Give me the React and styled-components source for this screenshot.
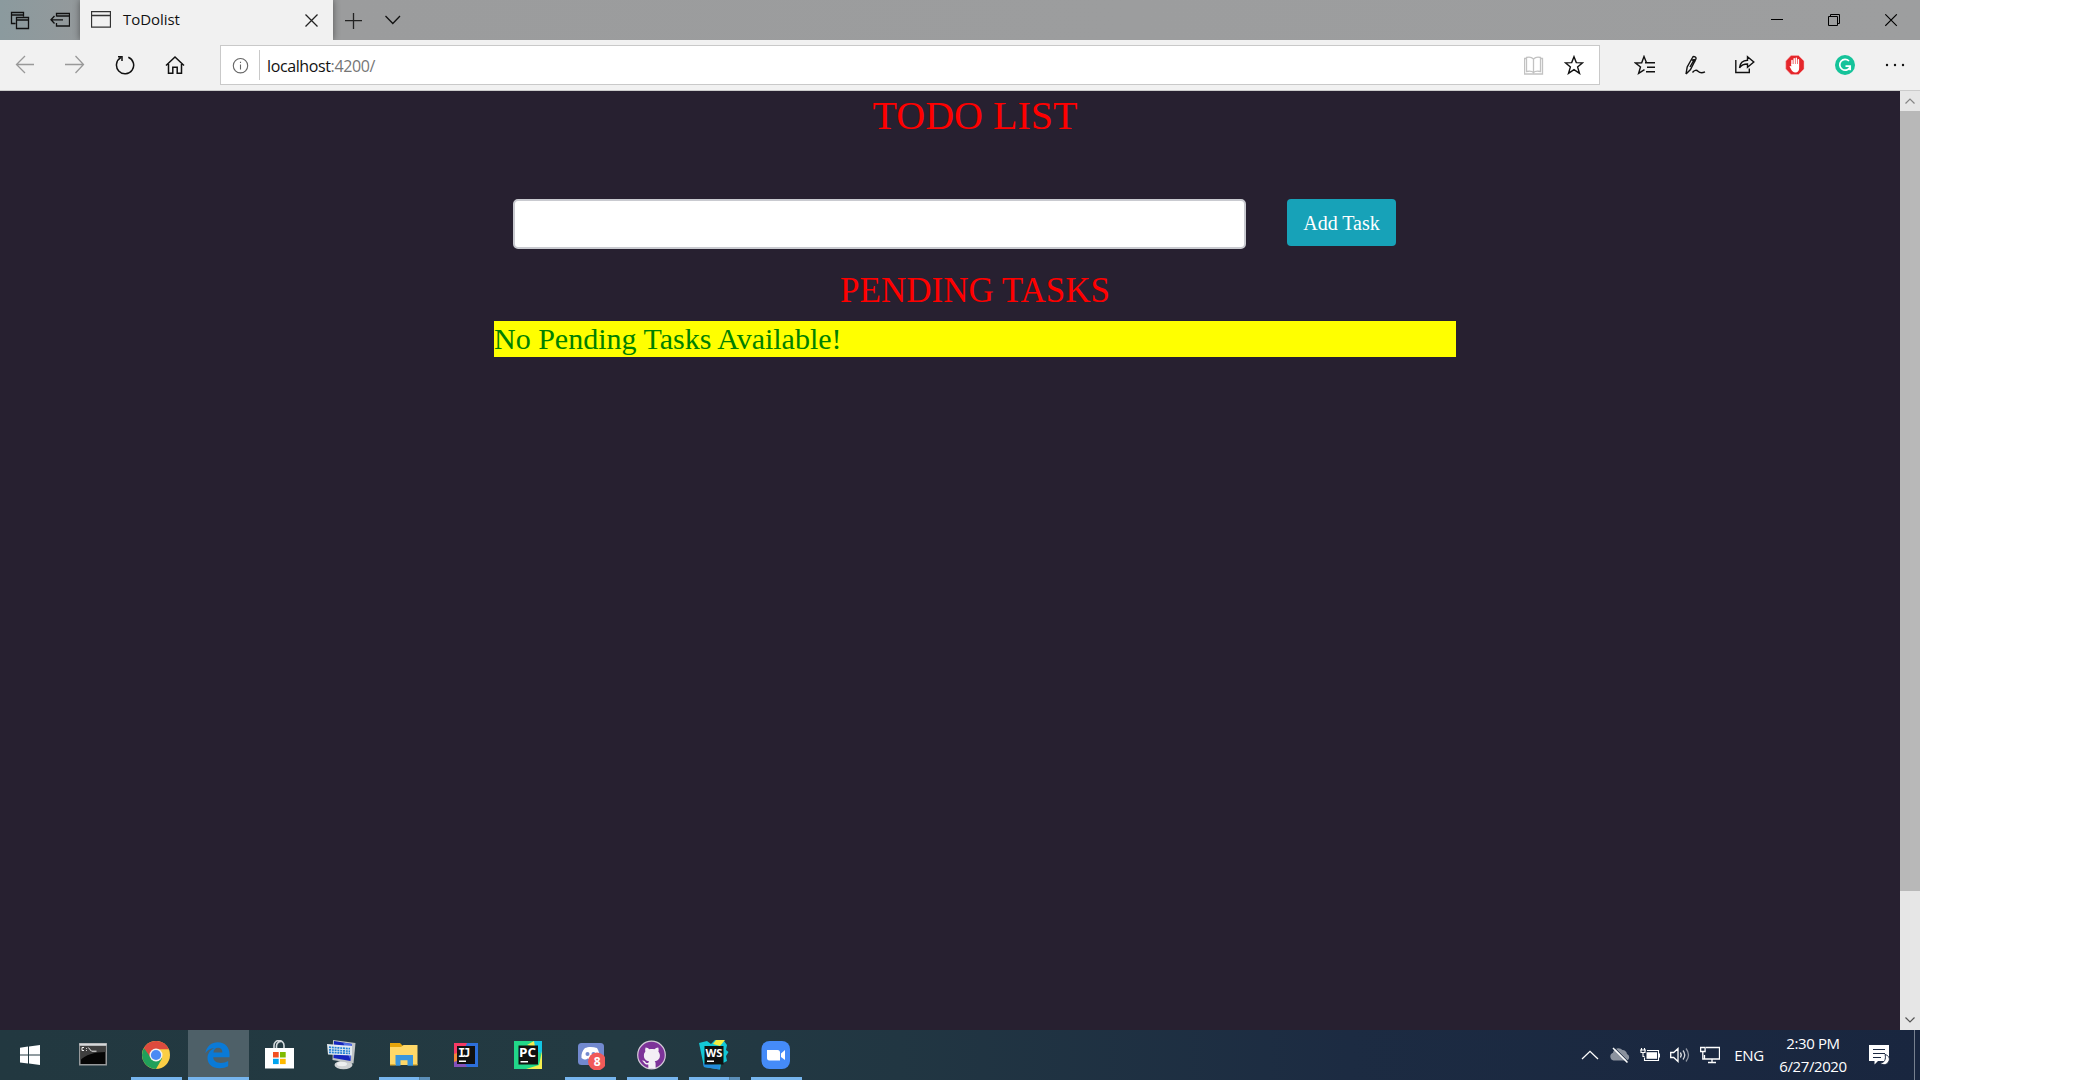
import React from "react";
import styled, { createGlobalStyle } from "styled-components";

const Global = createGlobalStyle`
  *, *::before, *::after { box-sizing: border-box; }
  html, body { margin: 0; background: #fff; }
  svg { display: block; flex: none; }
`;

const uiFont = `"Open Sans", "Noto Sans", sans-serif`;

const Screen = styled.div`
  width: 1920px;
  height: 1080px;
  display: flex;
  flex-direction: column;
  overflow: hidden;
`;

/* ---------- browser chrome ---------- */
const TabStrip = styled.header`
  height: 40px;
  display: flex;
  background: linear-gradient(90deg, #8b9a9e 0, #95999b 90px, #9b9c9d 340px, #9d9e9f 100%);
`;
const Cell = styled.div`
  width: ${(p) => p.$w}px;
  height: 100%;
  flex: none;
  display: flex;
  align-items: center;
  justify-content: center;
`;
const Tab = styled.div`
  width: 253px;
  display: flex;
  align-items: center;
  padding: 0 15px 0 11px;
  background: #f1f1f1;
  box-shadow: 0 0 7px rgba(0, 0, 0, 0.45);
  clip-path: inset(0 -8px 0 -8px);
`;
const TabTitle = styled.span`
  flex: 1;
  margin-left: 12px;
  padding-bottom: 2px;
  font: 15px/20px ${uiFont};
  letter-spacing: -0.05px;
  color: #111;
`;
const Spacer = styled.div`
  flex: 1;
`;
const Toolbar = styled.div`
  height: 51px;
  display: flex;
  background: #f1f1f1;
  border-bottom: 1px solid #cbcbcb;
`;
const Address = styled.div`
  width: 1380px;
  height: 40px;
  margin: 5px 0 0 20px;
  display: flex;
  align-items: center;
  background: #fff;
  border: 1px solid #c9c9c9;
`;
const Divider = styled.div`
  width: 1px;
  height: 30px;
  background: #c9c9c9;
`;
const Url = styled.div`
  flex: 1;
  padding: 2px 0 0 7px;
  font: 16px/22px ${uiFont};
  letter-spacing: -0.38px;
  color: #111;
`;
const UrlRest = styled.span`
  color: #767676;
`;
const Actions = styled.div`
  display: flex;
  margin-left: 20px;
`;

/* ---------- page ---------- */
const Viewport = styled.div`
  height: 939px;
  display: flex;
`;
const Page = styled.main`
  flex: 1;
  background: #272030;
  font-family: "Liberation Serif", "Times New Roman", serif;
`;
const Container = styled.div`
  width: 962px;
  margin-left: 494px;
  padding-top: 1px;
`;
const Title = styled.h1`
  margin: 0;
  font-size: 40px;
  font-weight: 400;
  line-height: 48px;
  text-align: center;
  color: #f00;
`;
const Form = styled.form`
  display: flex;
  align-items: flex-start;
  gap: 41px;
  margin-top: 59px;
  padding-left: 19px;
`;
const TaskInput = styled.input`
  width: 733px;
  height: 50px;
  padding: 8px 15px;
  border: 2px solid #c9cad0;
  border-radius: 5px;
  background: #fff;
  font: inherit;
  font-size: 20px;
`;
const AddButton = styled.button`
  width: 109px;
  height: 47px;
  padding: 0;
  border: 0;
  border-radius: 4px;
  background: #17a2b8;
  color: #fff;
  font: inherit;
  font-size: 20px;
  line-height: 30px;
`;
const Subtitle = styled.h3`
  margin: 21px 0 9px;
  font-size: 35px;
  font-weight: 400;
  line-height: 42px;
  text-align: center;
  color: #f00;
`;
const Notice = styled.h4`
  margin: 0;
  font-size: 30px;
  font-weight: 400;
  line-height: 36px;
  color: green;
  background: #ff0;
`;
const Scrollbar = styled.div`
  width: 20px;
  display: flex;
  flex-direction: column;
  background: #e6e6e6;
`;
const ScrollButton = styled.div`
  height: 20px;
  display: flex;
  align-items: center;
  justify-content: center;
`;
const Thumb = styled.div`
  height: 780px;
  margin-bottom: auto;
  background: #b8b8b8;
`;

/* ---------- taskbar ---------- */
const Taskbar = styled.footer`
  height: 50px;
  display: flex;
  background: linear-gradient(90deg, #223840 0, #233a42 620px, #213642 900px, #1c2b42 1350px, #19263f 1920px);
`;
const Apps = styled.div`
  display: flex;
  gap: 1px;
  margin-left: 4px;
`;
const AppSlot = styled.div`
  width: 61px;
  display: flex;
  flex-direction: column;
  align-items: center;
  background: ${(p) => (p.$active ? "#4e6068" : "transparent")};
`;
const AppIcon = styled.div`
  height: 47px;
  padding: 10px 1px 0 0;
`;
const Underline = styled.div`
  width: ${(p) => (p.$active ? 61 : 51)}px;
  height: 3px;
  background: ${(p) => (p.$stacked ? "linear-gradient(90deg, #76b5ee 40px, #4a6f88 40px, #5b8fb8 41px)" : "#76b5ee")};
`;
const Tray = styled.div`
  display: flex;
  color: #fff;
  font: 16px/23px ${uiFont};
`;
const Language = styled.div`
  width: 44px;
  padding-top: 14px;
  margin-left: 2px;
  text-align: center;
  font-size: 15px;
  letter-spacing: -0.3px;
`;
const Clock = styled.div`
  width: 84px;
  padding-top: 2px;
  font-size: 15px;
  letter-spacing: -0.4px;
  text-align: center;
  white-space: nowrap;
`;
const ShowDesktop = styled.div`
  width: 6px;
  margin-left: 9px;
  border-left: 1px solid #77808f;
`;

const Glyph = ({ w = 20, h = 20, color = "#111", sw = 1.3, children }) => (
  <svg width={w} height={h} viewBox={`0 0 ${w} ${h}`} fill="none" stroke={color} strokeWidth={sw}>
    {children}
  </svg>
);

const starPath = "M10 1.7L12.3 7.6L18.6 7.8L13.6 11.9L15.5 18.4L10 14.7L4.5 18.4L6.4 11.9L1.4 7.8L7.7 7.6Z";

/* ---------- app icons, each on a 30 by 30 grid ---------- */
const CmdIcon = () => (
  <g>
    <rect x="0.5" y="3" width="28" height="22.5" fill="#96999b" />
    <rect x="1" y="3.5" width="27" height="2" fill="#d5d8da" />
    <rect x="2" y="6" width="25" height="18" fill="#050505" />
    <path d="M2 6h25v6C15 12 7 15 2 20z" fill="#3e3e3e" />
    <path d="M5.5 7.5h-2v3h2M8 8v.8M8 10v.8M9.8 7.5l3 3.5M13 11.2h5" fill="none" stroke="#eee" strokeWidth="1" />
  </g>
);
const ChromeIcon = () => (
  <g>
    <circle cx="15" cy="15" r="14" fill="#fbce45" />
    <path d="M15 15L2.9 8A14 14 0 0 0 15 29l6-10.5z" fill="#21a05a" />
    <path d="M2.9 8A14 14 0 0 1 27.9 9.3H15l-5 8.6z" fill="#dd4b3e" />
    <circle cx="15" cy="15" r="6.5" fill="#f2f2f2" />
    <circle cx="15" cy="15" r="5.1" fill="#4a8af4" />
  </g>
);
const EdgeIcon = () => (
  <path
    d="M2.3 13.3C3.5 6 8.8 2.2 14.8 2.2c7.5 0 11.7 5.3 11.7 12v3H10.2c.2 4 3.7 5.7 7.5 5.7 2.8 0 5.4-.8 7.5-2v5.4c-2.4 1.3-5.4 2-8.5 2C9.5 28.3 4.5 24.3 4.5 18c0-4.4 2.8-8.2 7-10-4.5.2-7.5 2.5-9.2 5.3zM10.4 12.5h9c0-3.2-1.5-4.8-4.3-4.8-2.7 0-4.4 2-4.7 4.8z"
    fill="#0a7ad7"
  />
);
const StoreIcon = () => (
  <g>
    <path d="M9.5 9V5.5a5 5 0 0 1 10 0V9M12 9V6a4.5 4.5 0 0 1 5-4.500" fill="none" stroke="#d4dadd" strokeWidth="1.6" />
    <path d="M0.5 8h29v20.5h-29z" fill="#fff" />
    <path d="M8.5 12h5.700v5.500H8.500z" fill="#f25022" />
    <path d="M15.500 12h5.700v5.500h-5.700z" fill="#7fba00" />
    <path d="M8.500 18.800h5.700v5.300H8.500z" fill="#00a4ef" />
    <path d="M15.500 18.800h5.700v5.300h-5.700z" fill="#ffb900" />
  </g>
);
const RemoteIcon = () => (
  <g>
    <ellipse cx="16.5" cy="25" rx="9" ry="4.2" fill="#cfd2d4" />
    <ellipse cx="15" cy="24" rx="5" ry="2.2" fill="#edeff0" />
    <path d="M6 0l22.500 3-2 20.500-21-3.500z" fill="#c0c4c6" />
    <path d="M7 1l18 3-1.500 17-17-3z" fill="#1526bd" />
    <path d="M16 2.500l9 1.500-1.500 16z" fill="#526ee4" />
    <path d="M0 4l25 2v9.500l-24-1z" fill="#e2eaf0" />
    <path d="M2 7.200l21 1.500M2 9.800l21 1.500M2 12.300l21 1.200" stroke="#2481d4" strokeWidth="1.700" strokeDasharray="2 .8" />
  </g>
);
const FolderIcon = () => (
  <g>
    <path d="M1 3h10l3 3v6H1z" fill="#e5a50b" />
    <path d="M1 7h11l2.500-2h14v20H1z" fill="#ffd868" />
    <path d="M6.500 15h17.500v10.800h-5.500v-5.500h-7v5.500h-5z" fill="#3a96dd" />
    <path d="M1 24h5.500v1.500H1zM24 24h4.500v1.500H24z" fill="#e0b238" />
  </g>
);
const codeLabel = { fontFamily: '"Open Sans", sans-serif', fontWeight: 700, fill: "#fff" };
const IntelliJIcon = () => (
  <g>
    <path d="M3 3h24v24H3z" fill="#2d6fdb" />
    <path d="M3 3h13L9 18 3 23z" fill="#f73a65" />
    <path d="M3 14l6-2 1 9-7 2z" fill="#f48a35" />
    <path d="M3 22l8-3 5 8H3z" fill="#8450bb" />
    <path d="M6 6h18v18H6z" fill="#111" />
    <text x="7" y="16.500" fontSize="12" {...codeLabel} fontFamily='"DejaVu Sans Mono", monospace' textLength="12.500">IJ</text>
    <path d="M8 20.500h7v1.500H8z" fill="#fff" />
  </g>
);
const PyCharmIcon = () => (
  <g>
    <path d="M1 1h28v28H1z" fill="#21d789" />
    <path d="M20 1h9v13l-9-5z" fill="#12c5e4" />
    <path d="M14 5l7-4 1 6zM29 11v18H13l13-4z" fill="#f6ee4e" />
    <path d="M5.500 5.500h19.500v19H5.500z" fill="#10110f" />
    <text x="6" y="17" fontSize="12" textLength="17" lengthAdjust="spacingAndGlyphs" {...codeLabel}>PC</text>
    <path d="M7.500 21h7.500v1.500H7.500z" fill="#fff" />
  </g>
);
const DiscordIcon = () => (
  <g>
    <rect x="3" y="3" width="26" height="22" rx="3.500" fill="#7289cf" />
    <path d="M10 8c3-1.500 8-1.500 12 0 2 3 3 7 2.500 10-2 2-4 2.300-5 .500-2 .700-5 .700-7 0-1.500 2-3.500 1-6-.500-.500-4 1-7.500 3.500-10z" fill="#fff" />
    <circle cx="12.500" cy="14" r="2" fill="#7289cf" />
    <circle cx="18.500" cy="14" r="2" fill="#7289cf" />
    <circle cx="22" cy="21.500" r="9" fill="#f15a59" />
    <text x="18.800" y="26" fontSize="12" {...codeLabel}>8</text>
  </g>
);
const GitHubIcon = () => (
  <g>
    <circle cx="15" cy="15" r="13.800" fill="#7d3399" stroke="#d3cad8" strokeWidth="1.200" />
    <path
      d="M11.800 28.500v-4c-2.300.3-3.600-.5-4.400-2-.5-.9-1-1.400-1.800-1.700 1.600-.7 2.700.3 3.400 1.400.7 1 1.700 1.100 2.800.7.100-.8.400-1.300.8-1.700-3-.4-5.200-1.900-5.200-5.700 0-1.700.6-2.900 1.400-3.800-.3-1.400-.2-3 .3-4.300 1.500 0 3 1 3.900 1.800 1.300-.4 3.300-.4 4.800 0 1-.9 2.400-1.800 3.900-1.800.5 1.300.6 2.900.2 4.300.9 1 1.500 2.200 1.500 3.800 0 3.800-2.300 5.300-5.200 5.700.600.6.9 1.400.9 2.500v4.800z"
      fill="#f3eff5"
    />
  </g>
);
const WebStormIcon = () => (
  <g>
    <path d="M0 3l8-2 4 3 4-4 9 1 3 4-1 5 2.500 2-2.500 4 1 5-6 3-1 5.500L5 27z" fill="#13c8d6" />
    <path d="M4 23l17 2-.5 4.500L5 27z" fill="#238bdc" />
    <path d="M14 4l3-4h9l-5 6z" fill="#f7ed41" />
    <path d="M5.500 6h19v18.500h-19z" fill="#0e1110" />
    <text x="6.500" y="16.500" fontSize="11" textLength="17" lengthAdjust="spacingAndGlyphs" {...codeLabel}>WS</text>
    <path d="M8 20.500h7V22H8z" fill="#fff" />
  </g>
);
const ZoomIcon = () => (
  <g>
    <rect x="1" y="1" width="28.500" height="28" rx="8" fill="#458bf8" />
    <path d="M6.500 10h10.500c1.800 0 2.500 1 2.500 2.500v8H9c-1.800 0-2.500-1-2.500-2.500zM20.500 13.500l4-3.500v10l-4-3z" fill="#fff" />
  </g>
);

const apps = [
  { name: "cmd", Icon: CmdIcon, dx: -0.5 },
  { name: "chrome", Icon: ChromeIcon, running: true },
  { name: "edge", Icon: EdgeIcon, running: true, active: true },
  { name: "store", Icon: StoreIcon, dx: -0.5 },
  { name: "remote", Icon: RemoteIcon },
  { name: "folder", Icon: FolderIcon, running: true, stacked: true },
  { name: "intellij", Icon: IntelliJIcon },
  { name: "pycharm", Icon: PyCharmIcon },
  { name: "discord", Icon: DiscordIcon, running: true },
  { name: "github", Icon: GitHubIcon, running: true, dx: -0.5 },
  { name: "webstorm", Icon: WebStormIcon, running: true, stacked: true },
  { name: "zoom", Icon: ZoomIcon, running: true, dx: -0.5 },
];

function BrowserTabs() {
  return (
    <TabStrip>
      <Cell $w={40}>
        <Glyph>
          <path d="M5.500 13.500h-4v-11h12v4M1.500 5h12M6.500 7.500h12v11h-12zM6.500 10h12" />
        </Glyph>
      </Cell>
      <Cell $w={40}>
        <Glyph>
          <path d="M6.500 6.500v-3h13v12.500h-13v-3M6.500 6h13M1 9.800h12M4.500 6L1 9.800l3.500 3.700" />
        </Glyph>
      </Cell>
      <Tab>
        <Glyph h={18} color="#333">
          <path d="M.5.7h19v15.500H.5zM.5 4.500h19" />
        </Glyph>
        <TabTitle>ToDolist</TabTitle>
        <Glyph w={13} h={13} color="#222">
          <path d="M.5.5l12 12M12.500.500l-12 12" />
        </Glyph>
      </Tab>
      <Cell $w={40}>
        <Glyph w={18} h={18} color="#222">
          <path d="M1 9.700h17M9.500 2v16" />
        </Glyph>
      </Cell>
      <Cell $w={40}>
        <Glyph w={16} h={10}>
          <path d="M.500 1l7.300 7.500L15 1" />
        </Glyph>
      </Cell>
      <Spacer />
      <Cell $w={57}>
        <Glyph w={13} h={13} color="#000" sw={1}>
          <path d="M0 5.500h12" />
        </Glyph>
      </Cell>
      <Cell $w={57}>
        <Glyph w={13} h={13} color="#000" sw={1}>
          <path d="M.5 2.500h9v9h-9zM2.500 2.500v-2h9v9h-2" />
        </Glyph>
      </Cell>
      <Cell $w={57}>
        <Glyph w={13} h={13} color="#000" sw={1.1}>
          <path d="M.3.300l11.500 11.500M11.800.300L.300 11.800" />
        </Glyph>
      </Cell>
    </TabStrip>
  );
}

function BrowserToolbar() {
  return (
    <Toolbar>
      <Cell $w={50}>
        <Glyph color="#999">
          <path d="M19 9.500H1.500M10 1L1.500 9.500 10 18" />
        </Glyph>
      </Cell>
      <Cell $w={50}>
        <Glyph color="#999">
          <path d="M0 9.500h18M10.500 1l8 8.500-8 8.500" />
        </Glyph>
      </Cell>
      <Cell $w={50}>
        <Glyph sw={1.5}>
          <path d="M13.300 2.200a8.600 8.600 0 1 1-7.500.5M3 1.700h4v4.300" />
        </Glyph>
      </Cell>
      <Cell $w={50}>
        <Glyph sw={1.5}>
          <path d="M1 10.500l9-8.500 9 8.500M3.500 9v9.300h4.300v-6h4.400v6h4.300V9" />
        </Glyph>
      </Cell>
      <Address>
        <Cell $w={38}>
          <Glyph w={18} h={18} color="#666" sw={1.1}>
            <circle cx="9.500" cy="9.700" r="7.200" />
            <path d="M9.500 8.500v5M9.500 5.700V7" />
          </Glyph>
        </Cell>
        <Divider />
        <Url>
          localhost<UrlRest>:4200/</UrlRest>
        </Url>
        <Cell $w={40}>
          <Glyph color="#c2c2c2">
            <path d="M2.500 3.500h-2v15.500h18V3.500h-2M9.500 4v13M9.500 4C8 2.500 4.500 2 2.500 2.500v14c2-.400 5.500-.500 7 1 1.500-1.500 5-1.400 7-1v-14c-2-.500-5.500 0-7 1.500z" />
          </Glyph>
        </Cell>
        <Cell $w={40}>
          <Glyph sw={1.4}>
            <path d={starPath} />
          </Glyph>
        </Cell>
        <Cell $w={5} />
      </Address>
      <Actions>
        <Cell $w={50}>
          <Glyph w={22} sw={1.4}>
            <path d="M12.500 7.700L10 1.500 7.700 7.700 1.500 8l5 4-1.900 6.400L10.500 14.700M11 7.700h10M13 12.200h8M12 16.800h9" />
          </Glyph>
        </Cell>
        <Cell $w={50}>
          <Glyph w={22} sw={1.4}>
            <path d="M2 19l1.200-7L8.500 2.500c1-2 4.500-.500 3.300 1.800L6.500 14.500 2 19M7.500 4.500l4 2M10.500 4l-4.500 8M8.500 17.500c2-2.500 4-2.800 5.500-1.300 1.700 1.700 4 2 7 .700" />
          </Glyph>
        </Cell>
        <Cell $w={50}>
          <Glyph sw={1.4}>
            <path d="M.800 5v12.500h13.500v-4M4.500 12.800C5 8 8 5.500 12.500 5.300V1.800L18.800 7l-6.300 5.300V9c-3.500 0-6 .800-8 3.800z" />
          </Glyph>
        </Cell>
        <Cell $w={50}>
          <svg width="20" height="20" viewBox="0 0 20 20">
            <path d="M6 .500h7.500L19 6v8l-5.500 5.500H6L.800 14V6z" fill="#e5262b" stroke="#f6b5b5" strokeWidth=".5" />
            <path d="M7 9.500V5.500M9.200 9V3.700M11.300 9V3.200M13.400 9V4.700" stroke="#fff" strokeWidth="1.500" strokeLinecap="round" />
            <path d="M6.250 9h7.900v4c0 2.800-1.300 4.500-3.700 4.500-2.200 0-3.500-1.500-4.500-3.500L4.600 11.500c.3-.800 1.200-.600 1.650.100z" fill="#fff" />
          </svg>
        </Cell>
        <Cell $w={50}>
          <svg width="20" height="20" viewBox="0 0 20 20">
            <circle cx="10" cy="10" r="10" fill="#15c39a" />
            <path d="M14 6a5.400 5.400 0 1 0 .800 6.500M10.500 11.200h4.700v4" fill="none" stroke="#fff" strokeWidth="1.700" />
          </svg>
        </Cell>
        <Cell $w={50}>
          <svg width="20" height="4" viewBox="0 0 20 4" fill="#111">
            <circle cx="2" cy="2" r="1.200" />
            <circle cx="10" cy="2" r="1.200" />
            <circle cx="18" cy="2" r="1.200" />
          </svg>
        </Cell>
      </Actions>
    </Toolbar>
  );
}

function TodoPage() {
  return (
    <Viewport>
      <Page>
        <Container>
          <Title>TODO LIST</Title>
          <Form onSubmit={(e) => e.preventDefault()}>
            <TaskInput type="text" aria-label="Task" />
            <AddButton>Add Task</AddButton>
          </Form>
          <Subtitle>PENDING TASKS</Subtitle>
          <Notice>No Pending Tasks Available!</Notice>
        </Container>
      </Page>
      <Scrollbar>
        <ScrollButton>
          <Glyph w={10} h={6} color="#858585" sw={1.2}>
            <path d="M.5 5.500L5 1l4.500 4.500" />
          </Glyph>
        </ScrollButton>
        <Thumb />
        <ScrollButton>
          <Glyph w={10} h={6} color="#555" sw={1.2}>
            <path d="M.5.5L5 5l4.500-4.500" />
          </Glyph>
        </ScrollButton>
      </Scrollbar>
    </Viewport>
  );
}

function SystemTray() {
  return (
    <Tray>
      <Cell $w={30}>
        <Glyph w={18} h={10} color="#fff">
          <path d="M1 9l8-7.700L17 9" />
        </Glyph>
      </Cell>
      <Cell $w={30}>
        <svg width="22" height="18" viewBox="0 0 22 18">
          <path d="M4.500 14.500A4 4 0 0 1 4 6.800 5.500 5.500 0 0 1 13.500 4 5 5 0 0 1 18 8a3.500 3.500 0 0 1 0 6.500z" fill="#8b929e" />
          <path d="M4 2l14.500 14.500" stroke="#fff" strokeWidth="1.500" />
          <path d="M5.200 1.200l14.500 14.500" stroke="#243248" strokeWidth=".8" />
        </svg>
      </Cell>
      <Cell $w={30}>
        <Glyph w={20} h={16} color="#fff" sw={1.1}>
          <path d="M7 3.500h11.500v10h-14v-3M19.500 6.500v4M1.500 1v2M4.500 1v2M0 3h6M1 3v2.500h4V3M3 5.500v4h1.500" />
          <path d="M6.500 5.200h10.500v6.600H6.500z" fill="#fff" stroke="none" />
        </Glyph>
      </Cell>
      <Cell $w={30}>
        <Glyph w={20} h={18} color="#fff">
          <path d="M.7 6.500h3L8 2.500v13l-4.300-4H.7zM10.500 6.500q1.500 2.500 0 5" />
          <path d="M13 4.500q3.500 4.500 0 9" opacity=".8" />
          <path d="M16 2.500q5 6.500 0 13" opacity=".5" />
        </Glyph>
      </Cell>
      <Cell $w={30}>
        <Glyph w={20} h={18} color="#fff">
          <path d="M6 1.500h13.500v11.500H4.500V9M12 13v3.500M8 16.500h8M.6 1.500h4.500v4H.6zM2.800 5.500V13h2" />
        </Glyph>
      </Cell>
      <Language>ENG</Language>
      <Clock>
        2:30 PM
        <br />
        6/27/2020
      </Clock>
      <Cell $w={50}>
        <svg width="22" height="22" viewBox="0 0 22 22">
          <path d="M0 1h20v16H9l-3.500 3.500V17H0z" fill="#fff" />
          <path d="M4 5.500h12M4 9.500h12M4 13.500h8" stroke="#1c2942" strokeWidth="1.200" />
          <path d="M16 10.500c4 1 5.500 4.500 3.500 7.500-2 3.300-6.500 3.500-8.500 1 4 .5 6.500-4 5-8.500z" fill="#fff" stroke="#1c2942" />
        </svg>
      </Cell>
      <ShowDesktop />
    </Tray>
  );
}

export default function App() {
  return (
    <Screen>
      <Global />
      <BrowserTabs />
      <BrowserToolbar />
      <TodoPage />
      <Taskbar>
        <Cell $w={60}>
          <svg width="20" height="20" viewBox="0 0 20 20" fill="#fff">
            <path d="M0 2.800l8-1.200v8H0zM9 1.500L20 0v9.600H9zM0 10.600h8v7.900l-8-1.100zM9 10.600h11V20L9 18.500z" />
          </svg>
        </Cell>
        <Apps>
          {apps.map(({ name, Icon, running, active, stacked, dx = 0 }) => (
            <AppSlot key={name} $active={active}>
              <AppIcon>
                <svg width="30" height="30" viewBox={`${-dx} 0 30 30`}>
                  <Icon />
                </svg>
              </AppIcon>
              {running && <Underline $active={active} $stacked={stacked} />}
            </AppSlot>
          ))}
        </Apps>
        <Spacer />
        <SystemTray />
      </Taskbar>
    </Screen>
  );
}
